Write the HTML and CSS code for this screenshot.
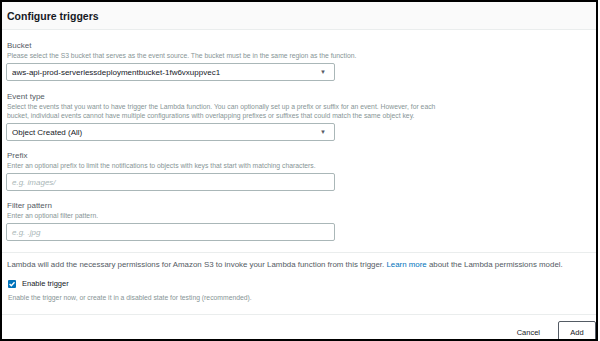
FILE: index.html
```html
<!DOCTYPE html>
<html lang="en">
<head>
  <meta charset="UTF-8" />
  <meta name="viewport" content="width=device-width, initial-scale=1.0"/>
  <title>Configure triggers</title>
  <link rel="stylesheet" href="styles.css">
</head>
<body>
  <div class="panel">
    <div class="panel-header">
      <h2>Configure triggers</h2>
    </div>

    <div class="panel-body">
      <div class="field">
        <label>Bucket</label>
        <p class="hint">Please select the S3 bucket that serves as the event source. The bucket must be in the same region as the function.</p>
        <div class="select">aws-api-prod-serverlessdeploymentbucket-1fw6vxuppvec1<span class="caret">&#9660;</span></div>
      </div>

      <div class="field">
        <label>Event type</label>
        <p class="hint">Select the events that you want to have trigger the Lambda function. You can optionally set up a prefix or suffix for an event. However, for each<br/>bucket, individual events cannot have multiple configurations with overlapping prefixes or suffixes that could match the same object key.</p>
        <div class="select">Object Created (All)<span class="caret">&#9660;</span></div>
      </div>

      <div class="field">
        <label>Prefix</label>
        <p class="hint">Enter an optional prefix to limit the notifications to objects with keys that start with matching characters.</p>
        <div class="input">e.g. images/</div>
      </div>

      <div class="field">
        <label>Filter pattern</label>
        <p class="hint">Enter an optional filter pattern.</p>
        <div class="input">e.g. .jpg</div>
      </div>
    </div>

    <div class="panel-note">
      <p class="note">Lambda will add the necessary permissions for Amazon S3 to invoke your Lambda function from this trigger. <a href="#">Learn more</a> about the Lambda permissions model.</p>

      <div class="check-row">
        <span class="checkbox">
          <svg width="8" height="8" viewBox="0 0 8 8"><path d="M1.6 4.1 L3.3 5.8 L6.5 2.2" fill="none" stroke="#fff" stroke-width="1.4"/></svg>
        </span>
        <span class="check-label">Enable trigger</span>
      </div>
      <p class="hint">Enable the trigger now, or create it in a disabled state for testing (recommended).</p>
    </div>

    <div class="panel-footer">
      <button class="btn-link">Cancel</button>
      <button class="btn">Add</button>
    </div>
  </div>
</body>
</html>
```

FILE: styles.css
```css
html, body {
  margin: 0;
  padding: 0;
  background-color: #fff;
}

body {
  font-family: "Liberation Sans", Arial, sans-serif;
  color: #545b64;
}

.panel {
  width: 598px;
  height: 341px;
  box-sizing: border-box;
  border: 2px solid #000;
  overflow: hidden;
}

.panel-header {
  height: 27px;
  padding-left: 5px;
  display: flex;
  align-items: center;
  background-color: #fafafa;
  border-bottom: 1px solid #eaeded;
}

.panel-header h2 {
  margin: 0;
  font-size: 10.5px;
  font-weight: bold;
  color: #16191f;
}

.panel-body {
  padding: 0 4px 0 4px;
}

.field {
  margin-top: 11px;
}

.field:nth-child(n+3) {
  margin-top: 10px;
}

.field label {
  display: block;
  font-size: 8px;
  line-height: 10px;
  color: #545b64;
  padding-left: 1px;
}

.hint {
  margin: 0;
  padding-left: 1px;
  font-size: 6.8px;
  line-height: 9px;
  color: #879596;
}

.select,
.input {
  width: 329px;
  height: 18px;
  box-sizing: border-box;
  margin-top: 3px;
  padding: 0 8px 0 5px;
  border: 1px solid #aab7b8;
  border-radius: 2px;
  display: flex;
  align-items: center;
  justify-content: space-between;
  font-size: 8px;
  color: #16191f;
  background-color: #fff;
}

.input {
  font-style: italic;
  color: #aab7b8;
}

.caret {
  font-size: 6px;
  color: #545b64;
}

.panel-note {
  margin-top: 11px;
  border-top: 1px solid #eaeded;
  padding: 7px 4px 12px 5px;
}

.note {
  margin: 0;
  font-size: 7.9px;
  line-height: 10px;
  color: #545b64;
}

.note a {
  color: #0073bb;
  text-decoration: none;
}

.check-row {
  display: flex;
  align-items: center;
  gap: 6px;
  margin-top: 9px;
  margin-left: 1px;
}

.checkbox {
  width: 8px;
  height: 8px;
  border-radius: 1px;
  background-color: #0073bb;
  display: flex;
}

.check-label {
  font-size: 7.5px;
  line-height: 10px;
  color: #16191f;
}

.panel-note .hint {
  margin-top: 4px;
}

.panel-footer {
  border-top: 1px solid #eaeded;
  padding-top: 6px;
  display: flex;
  justify-content: flex-end;
  align-items: flex-start;
  gap: 18px;
}

.btn-link,
.btn {
  font-family: "Liberation Sans", Arial, sans-serif;
  font-size: 7.5px;
  color: #16191f;
  background: #fff;
  cursor: pointer;
}

.btn-link {
  border: none;
  padding: 0;
  height: 22px;
}

.btn {
  width: 38px;
  height: 22px;
  border: 1px solid #545b64;
  border-radius: 2px;
}
```
